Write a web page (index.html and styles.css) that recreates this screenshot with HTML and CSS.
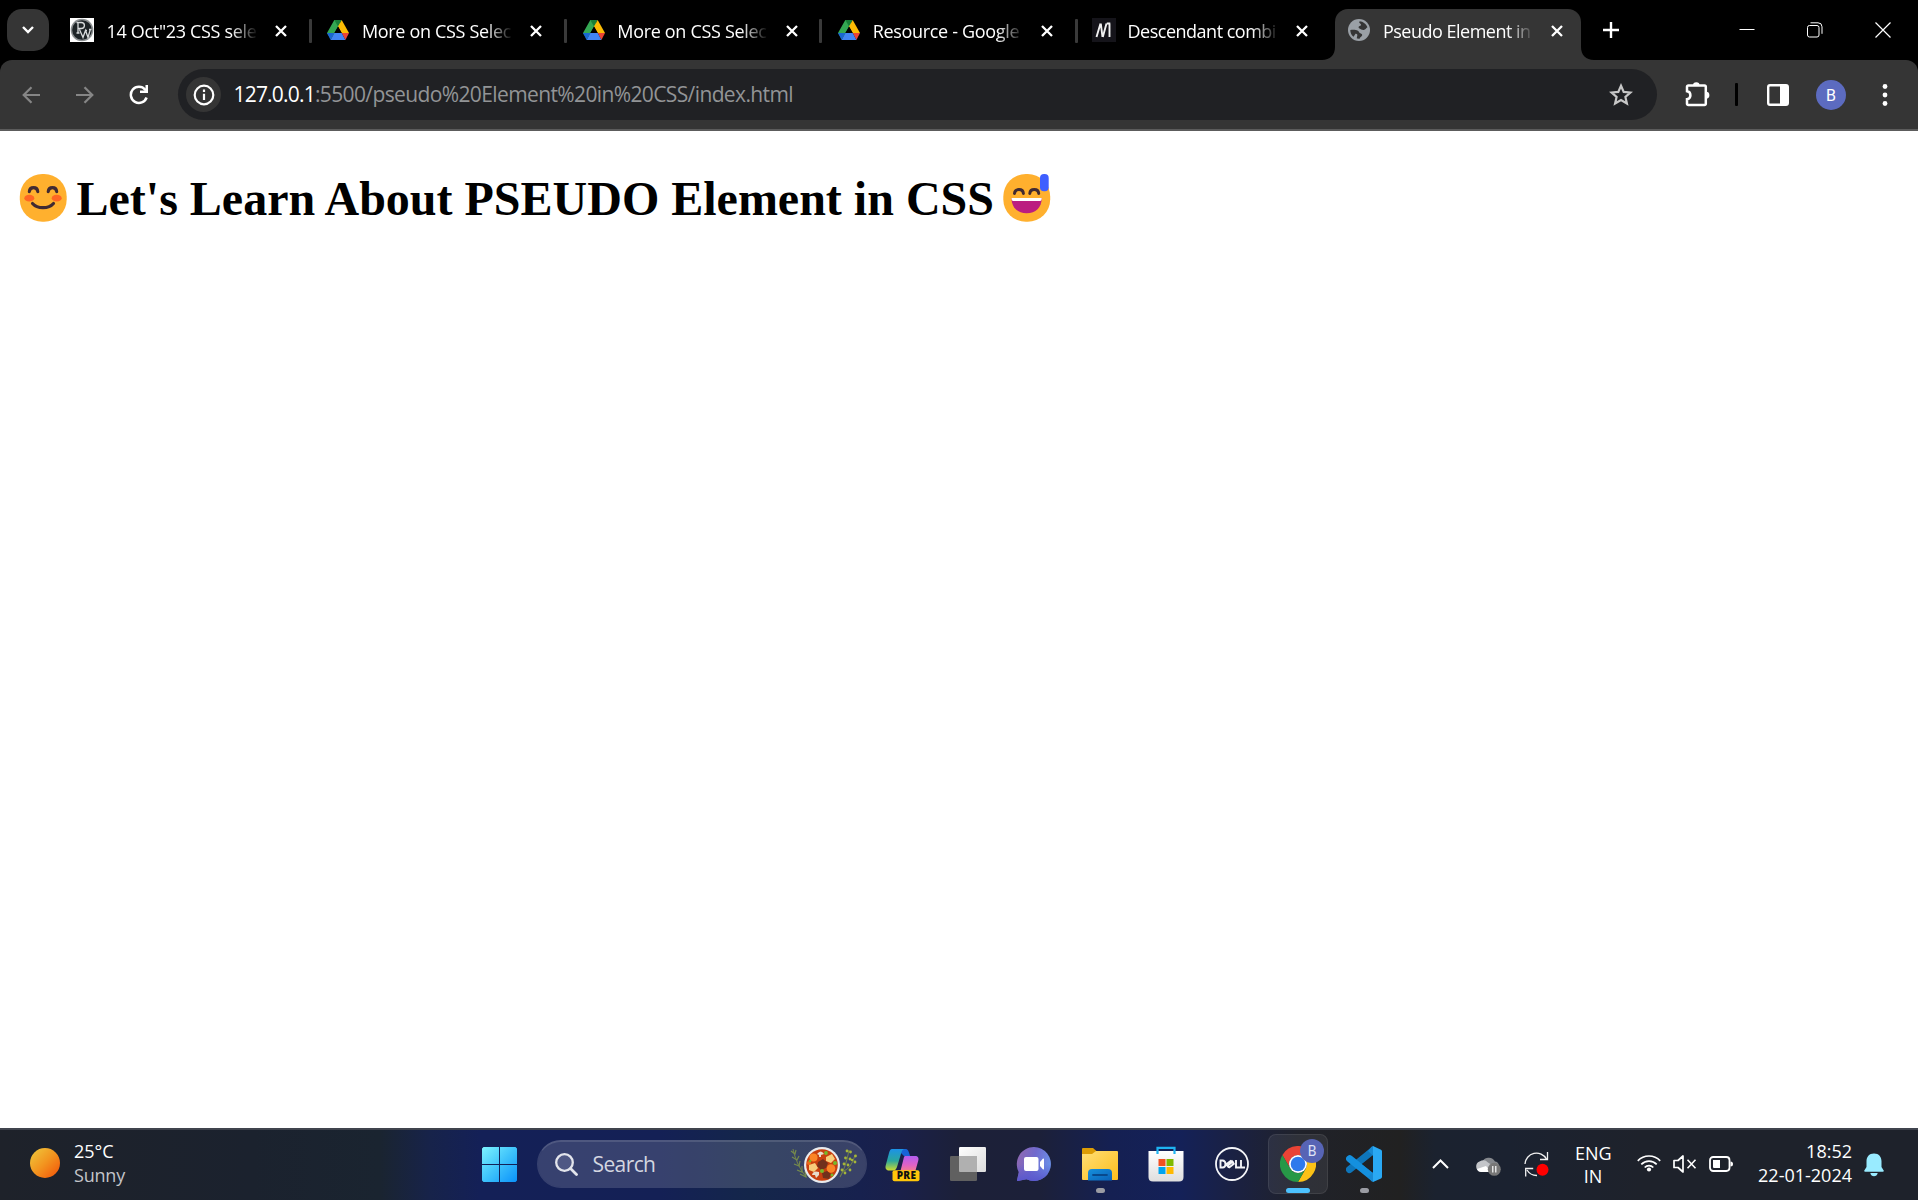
FILE: index.html
```html
<!DOCTYPE html>
<html lang="en">
<head>
<meta charset="utf-8">
<title>Pseudo Element in CSS</title>
<link rel="stylesheet" href="styles.css">
</head>
<body>
<svg class="defs" width="0" height="0" aria-hidden="true">
  <symbol id="drive" viewBox="0 0 22 20">
    <path fill="#34a853" d="M7.3 0h3.7l3.8 6.6-3.6.1L4 19.2 0 13z"/>
    <path fill="#188038" d="M7.3 0h7.4L11 6.6z"/>
    <path fill="#fbbc04" d="M14.7 0 22 13h-7.3L11 6.6z"/>
    <path fill="#ea4335" d="M22 13l-3.6 7-3.7-7z"/>
    <path fill="#4285f4" d="M7.3 13h7.4l3.7 7H3.6z"/>
    <path fill="#1967d2" d="M0 13h7.3L3.6 20z"/>
    <path fill="#000" d="M11 6.6l3.7 6.4H7.3z"/>
  </symbol>
  <symbol id="close" viewBox="0 0 12 12"><path d="M1 1l10 10M11 1L1 11" stroke="#fff" stroke-width="2.3" fill="none"/></symbol>
</svg>

<header class="tabstrip">
  <button class="tab-search"><svg width="12" height="8" viewBox="0 0 12 8"><path d="M1 1l5 5 5-5" fill="none" stroke="#fff" stroke-width="2.4"/></svg></button>
  <nav class="tabs">
    <div class="tab">
      <svg class="favicon" viewBox="0 0 24 24"><path fill="#fff" d="M0 0h24v24H0z"/><circle cx="12" cy="12" r="11.3" fill="#8b8f91"/><circle cx="12" cy="12" r="9.8" fill="#1e2427"/><path d="M8 15V4.500h3.200c4.300 0 4.300 6 0 6H8M6.500 4.500H8M6.500 15h3M9.500 11.500l3.500 8 2.500-7 2.500 7 2.300-8M15 12.500h2M19 11.500h2.500" fill="none" stroke="#d9dcdd" stroke-width="1.3"/></svg>
      <span class="title">14 Oct"23 CSS sele</span>
      <svg class="close"><use href="#close"/></svg>
    </div>
    <div class="tab">
      <svg class="favicon drive"><use href="#drive"/></svg>
      <span class="title">More on CSS Selec</span>
      <svg class="close"><use href="#close"/></svg>
    </div>
    <div class="tab">
      <svg class="favicon drive"><use href="#drive"/></svg>
      <span class="title">More on CSS Selec</span>
      <svg class="close"><use href="#close"/></svg>
    </div>
    <div class="tab">
      <svg class="favicon drive"><use href="#drive"/></svg>
      <span class="title">Resource - Google</span>
      <svg class="close"><use href="#close"/></svg>
    </div>
    <div class="tab last">
      <svg class="favicon" viewBox="0 0 24 24"><path fill="#15141a" d="M0 0h24v24H0z"/><path d="M4.500 19L8.500 5.500M8.800 5.500L10.500 19M10.800 19L14.500 5.500M17.500 5.500v13.500M14.800 5.500h3.500" fill="none" stroke="#f2f2f2" stroke-width="1.900"/></svg>
      <span class="title tight">Descendant combi</span>
      <svg class="close"><use href="#close"/></svg>
    </div>
    <div class="tab active">
      <svg class="favicon" viewBox="0 0 24 24"><circle cx="12" cy="12" r="11" fill="#9aa0a6"/><path fill="#353535" d="M12.600 3.200c3.600.3 6.700 2.700 7.800 6-1.400 1-2 2.500-3.600 2.700-1.900.2-3-.8-4.300-1.400-1.100-.5-1.200-1.600-.4-2.200.9-.7 2-.7 1.900-1.900-.1-1-1.600-1.100-1.800-2zM3.300 12c2.500-.5 5.400-.5 7.600.8 1.100.7 1 2 2.400 2.500 1.300.5 2.200 1 1.800 2.200-.5 1.300-2 1.400-2.500 3.200C7.500 21 3.300 17 3.300 12z"/><path fill="#9aa0a6" d="M8.500 15.800c1.500-.3 2 .7 1.800 1.800l-.8 3.800-3.500-2z"/></svg>
      <span class="title tight">Pseudo Element in</span>
      <svg class="close"><use href="#close"/></svg>
      <svg class="flare left" viewBox="0 0 13 13"><path d="M13 0v13H0C8 13 13 8 13 0z" fill="#353535"/></svg>
      <svg class="flare right" viewBox="0 0 13 13"><path d="M0 0v13h13C5 13 0 8 0 0z" fill="#353535"/></svg>
    </div>
  </nav>
  <svg class="new-tab" width="16" height="16" viewBox="0 0 16 16"><path d="M8 0v16M0 8h16" stroke="#fff" stroke-width="2.400"/></svg>
  <div class="window-controls">
    <svg width="16" height="16" viewBox="0 0 16 16"><path d="M.5 7.500h15" stroke="#fff" stroke-width="1"/></svg>
    <svg width="16" height="16" viewBox="0 0 16 16"><rect x=".5" y="3.500" width="11.500" height="11.500" rx="2" fill="none" stroke="#fff"/><path d="M3.500.8h7.500a4 4 0 0 1 4 4v7" fill="none" stroke="#fff"/></svg>
    <svg width="16" height="16" viewBox="0 0 16 16"><path d="M.5.5l15 15M15.500.5l-15 15" stroke="#fff" stroke-width="1.200"/></svg>
  </div>
</header>

<div class="toolbar-wrap">
<div class="toolbar">
  <svg class="back" width="18" height="18" viewBox="0 0 18 18"><path d="M18 9H2M9.500 1.200L1.700 9l7.800 7.800" fill="none" stroke="#868686" stroke-width="2.200"/></svg>
  <svg class="forward" width="18" height="18" viewBox="0 0 18 18"><path d="M0 9h16M8.500 1.200L16.300 9l-7.800 7.800" fill="none" stroke="#868686" stroke-width="2.200"/></svg>
  <svg class="reload" width="20" height="20" viewBox="0 0 20 20"><path d="M17.600 12.500A8.100 8.100 0 1 1 16.200 4.600L17 5.500" fill="none" stroke="#fff" stroke-width="2.500"/><path d="M19 0v8h-8V5.500h5.500V0z" fill="#fff"/></svg>
  <div class="omnibox">
    <span class="site-info"><svg width="22" height="22" viewBox="0 0 22 22"><circle cx="11" cy="11" r="9.300" fill="none" stroke="#fff" stroke-width="2.200"/><path d="M11 9.800v6.200M11 5.600v2.300" stroke="#fff" stroke-width="2.200"/></svg></span>
    <span class="url"><b>127.0.0.1</b><span>:5500/pseudo%20Element%20in%20CSS/index.html</span></span>
    <svg class="star" width="24" height="24" viewBox="0 0 24 24"><path d="M12 2.800l2.700 6.100 6.700.6-5 4.400 1.500 6.600-5.900-3.500-5.900 3.500 1.500-6.600-5-4.400 6.700-.6z" fill="none" stroke="#c7c7c7" stroke-width="2.200"/></svg>
  </div>
  <svg class="extensions" width="26" height="26" viewBox="0 0 26 26"><path d="M3.300 4.400h16.200a1.300 1.300 0 0 1 1.300 1.300v17a1.300 1.300 0 0 1-1.300 1.300H3.300A1.300 1.300 0 0 1 2 22.700v-4.500c2.200-.3 3.400-1.900 3.400-4s-1.200-3.700-3.400-4V5.700a1.300 1.300 0 0 1 1.300-1.300z" fill="none" stroke="#fff" stroke-width="2.500"/><path d="M8 4.500a3.300 3.300 0 0 1 6.600 0zM21 10.800a3.300 3.300 0 0 1 0 6.800z" fill="#fff"/></svg>
  <i class="divider"></i>
  <svg class="side-panel" width="22" height="22" viewBox="0 0 22 22"><rect x="1.200" y="1.200" width="19.600" height="19.600" rx="1.800" fill="none" stroke="#fff" stroke-width="2.400"/><path d="M13 1h8v20h-8z" fill="#fff"/></svg>
  <span class="avatar">B</span>
  <svg class="menu" width="6" height="24" viewBox="0 0 6 24"><g fill="#fff"><circle cx="3" cy="3.500" r="2.400"/><circle cx="3" cy="12" r="2.400"/><circle cx="3" cy="20.500" r="2.400"/></g></svg>
</div>
</div>

<main class="page">
  <h1>
    <svg width="48" height="48" viewBox="0 0 48 48"><rect x=".8" y="0" width="46.900" height="47.800" rx="22.500" fill="#ffb02e"/><ellipse cx="10.300" cy="24.200" rx="5" ry="3.400" fill="#ff6723"/><ellipse cx="37.700" cy="24.200" rx="5" ry="3.400" fill="#ff6723"/><path d="M10.300 17.600c.5-5.300 8-5.300 8.500 0M29.200 17.600c.5-5.300 8-5.300 8.500 0M13.500 29.400c4.800 5.600 16.200 5.600 21 0" fill="none" stroke="#402a32" stroke-width="3.100" stroke-linecap="round"/></svg>
    <span>Let's Learn About PSEUDO Element in CSS</span>
    <svg width="48" height="48" viewBox="0 0 48 48"><rect x=".3" y="0" width="46.900" height="47.800" rx="22.500" fill="#ffb02e"/><path d="M11.500 19.500c.4-5.200 8.500-5.200 8.900 0M26.800 19.500c.4-5.200 8.500-5.200 8.900 0" fill="none" stroke="#402a32" stroke-width="3" stroke-linecap="round"/><path d="M8.500 24h30.200c0 9.500-6 15.300-15.100 15.300S8.500 33.500 8.500 24z" fill="#bb1d80"/><path d="M8.500 24h30.200c0 1.900-.5 3-1.700 3H10.200c-1.200 0-1.700-1.100-1.700-3z" fill="#fff"/><rect x="37" y="0" width="8.700" height="17.300" rx="4" fill="#3f5fff"/></svg>
  </h1>
</main>

<footer class="taskbar">
  <div class="weather"><i class="sun"></i><p>25°C<br><span>Sunny</span></p></div>
  <svg class="start" width="35" height="35" viewBox="0 0 35 35">
    <defs><linearGradient id="win" gradientUnits="userSpaceOnUse" x1="0" y1="0" x2="35" y2="35"><stop offset="0" stop-color="#7df3ff"/><stop offset=".5" stop-color="#3fc3fb"/><stop offset="1" stop-color="#0a92fb"/></linearGradient></defs>
    <path fill="url(#win)" d="M1.500 0H17v17H0V1.500zM18 0h15.500L35 1.500V17H18zM0 18h17v17H1.500L0 33.500zM18 18h17v15.500L33.500 35H18z"/></svg>
  <div class="search">
    <svg width="23" height="23" viewBox="0 0 23 23"><circle cx="9.500" cy="9.500" r="8.300" fill="#8088ad55" stroke="#e3e5ec" stroke-width="2.300"/><path d="M15.500 15.500l6 6" stroke="#e3e5ec" stroke-width="2.800" stroke-linecap="round"/></svg>
    <span>Search</span>
    <svg class="bowl" width="68" height="38" viewBox="0 0 68 38">
      <path d="M3 3q3 15 13 28M50 31q6-10 9-27M52 26q10-4 13-17" fill="none" stroke="#71804b" stroke-width="1.100"/>
      <g stroke="#758b4d" stroke-width="1.200" fill="none"><path d="M1 5l4 3 1-4M2 11l5 3 2-4M4 18l5 2 1-5M7 24l5 2v-6M10 28l6 3-1-6"/></g>
      <g fill="#a5b638"><circle cx="57" cy="5" r="1.400"/><circle cx="60.500" cy="6" r="1.400"/><circle cx="55.500" cy="12" r="1.400"/><circle cx="60" cy="13" r="1.400"/><circle cx="54" cy="18" r="1.400"/><circle cx="58" cy="19" r="1.400"/><circle cx="65.500" cy="10" r="1.400"/><circle cx="62" cy="14" r="1.200"/><circle cx="65" cy="16" r="1.400"/><circle cx="60" cy="24" r="1.400"/><circle cx="52" cy="24" r="1.400"/><circle cx="55" cy="27" r="1.400"/></g>
      <circle cx="32" cy="19" r="18" fill="#e9ebee"/><circle cx="32" cy="19" r="15.800" fill="#c8400f"/>
      <circle cx="23.500" cy="11.500" r="4" fill="#fb8526"/><circle cx="41" cy="22.500" r="4.300" fill="#fb8526"/><circle cx="19" cy="17" r="2" fill="#ee6c17"/>
      <path d="M36 11l6-3 3 5-4 4-5-2zM19 19l6-2 3 5-4 4-5-2z" fill="#f8cd7b"/>
      <path d="M28 16l5-3 5 4-2 5-5 2-4-4zM32 27l5-2 4 3-2 5-6-1z" fill="#71301c"/>
      <path d="M27 8q4-5 7 0l-3 1v2h-2V9zM22 29q1-5 7-3v3l-3 3-1-3z" fill="#e8dccb"/>
      <g fill="#75b82a"><circle cx="36" cy="7" r="1.900"/><circle cx="45" cy="17" r="2"/><circle cx="32" cy="25" r="2"/><circle cx="20" cy="15" r="1.300"/><circle cx="42" cy="29" r="1.500"/></g>
    </svg>
  </div>
  <div class="apps">
    <div class="app"><svg width="36" height="36" viewBox="0 0 36 36">
      <defs><linearGradient id="cpa" x1="0" y1="0" x2="0" y2="1"><stop offset="0" stop-color="#1c92e8"/><stop offset=".55" stop-color="#2ba79d"/><stop offset="1" stop-color="#cddb2e"/></linearGradient><linearGradient id="cpb" x1="0" y1="0" x2="0" y2="1"><stop offset="0" stop-color="#b25df0"/><stop offset=".5" stop-color="#e062c6"/><stop offset="1" stop-color="#ff8a70"/></linearGradient></defs>
      <path fill="#1763d8" d="M10 3h11c3 0 3.500 2 4.300 4.500l.8 2.500H20l-3-3z"/>
      <path fill="url(#cpa)" d="M8 3h13c-2 0-3 1.500-3.600 3.500L13 21c-.8 2.500-2 3.500-4 3.500H5c-3 0-4-2.500-3.300-5L5 7c.8-2.800 1.500-4 3-4z"/>
      <path fill="url(#cpb)" d="M21 10h10c3 0 4 2 3.300 4.500L30.500 28H13c2 0 3-1.500 3.600-3.500L19.500 13c.4-1.600.7-3 1.500-3z"/>
      <rect x="8.500" y="24.300" width="27" height="11" rx="2" fill="#ffc60a"/></svg><span class="pre">PRE</span></div>
    <div class="app"><svg width="36" height="36" viewBox="0 0 36 36"><defs><linearGradient id="tv" x1="0" y1="0" x2="1" y2="1"><stop offset="0" stop-color="#fff"/><stop offset="1" stop-color="#dcdcdc"/></linearGradient></defs><rect x="9" y="1" width="27" height="25" rx="1.200" fill="url(#tv)"/><rect x="0" y="10" width="27" height="25" rx="1.200" fill="#606060"/><path d="M9 10h18v16H10q-1 0-1-1z" fill="#b0b0b0"/></svg></div>
    <div class="app"><svg width="36" height="36" viewBox="0 0 36 36"><defs><linearGradient id="ch" x1="0" y1=".2" x2="1" y2=".5"><stop offset="0" stop-color="#9068b0"/><stop offset=".5" stop-color="#7069cd"/><stop offset="1" stop-color="#6b91e8"/></linearGradient><linearGradient id="ch2" x1="0" y1="0" x2="0" y2="1"><stop offset=".5" stop-color="#5957cd" stop-opacity="0"/><stop offset="1" stop-color="#5957cd"/></linearGradient></defs><path d="M18 1a17 17 0 1 1-7.500 32.300L1.500 35q-.7-.2-.4-1l1.700-8A17 17 0 0 1 18 1z" fill="url(#ch)"/><path d="M18 1a17 17 0 1 1-7.500 32.300L1.500 35q-.7-.2-.4-1l1.700-8A17 17 0 0 1 18 1z" fill="url(#ch2)"/><rect x="8" y="11" width="14.500" height="14" rx="2" fill="#fff"/><path d="M24 16l2.800-3.200q1.200-.8 1.200.5v9.400q0 1.300-1.200.5L24 20z" fill="#fff"/></svg></div>
    <div class="app"><svg width="36" height="36" viewBox="0 0 36 36"><defs><linearGradient id="fo" x1="0" y1="0" x2="1" y2="1"><stop offset="0" stop-color="#ffdf75"/><stop offset="1" stop-color="#fcbd1c"/></linearGradient><linearGradient id="fb" x1="0" y1="0" x2="1" y2="1"><stop offset="0" stop-color="#1690dc"/><stop offset="1" stop-color="#0a62b8"/></linearGradient></defs><path d="M0 3q0-1 1-1h10l4 3.500L11 9H0z" fill="#dc9c04"/><path d="M0 8h10l4-3h21q1 0 1 1v27q0 1-1 1H1q-1 0-1-1z" fill="url(#fo)"/><path d="M6 34.500V27q0-4 4-4h16q4 0 4 4v7.500z" fill="url(#fb)"/><path d="M11 29h14" stroke="#08498c" stroke-width="1.800" stroke-linecap="round"/></svg><i class="mark"></i></div>
    <div class="app"><svg width="36" height="36" viewBox="0 0 36 36"><defs><linearGradient id="st" x1="0" y1="0" x2="0" y2="1"><stop offset="0" stop-color="#fff"/><stop offset="1" stop-color="#dedede"/></linearGradient></defs><path d="M.5 5h35v26q0 4.500-4.500 4.500H5Q.5 35.500.5 31z" fill="url(#st)"/><path d="M9.500 8V1.900h17V8" fill="none" stroke="#1eb3f1" stroke-width="2.200"/><path fill="#f25022" d="M10.500 13h7v7h-7z"/><path fill="#7fba00" d="M18.500 13h7v7h-7z"/><path fill="#00a4ef" d="M10.500 21h7v7h-7z"/><path fill="#ffb900" d="M18.500 21h7v7h-7z"/></svg></div>
    <div class="app"><svg width="36" height="36" viewBox="0 0 36 36"><circle cx="18" cy="18" r="16" fill="none" stroke="#f4f5f8" stroke-width="1.800"/><path d="M6.500 14.500v7h2c4 0 4-7 0-7zM12.300 18.300l5-3.900M13.300 20l5-3.900M14.800 21.800l5.700-4.500M12.300 18.300l2.700 3.400M17.300 14.400l2.300 2.500M22 14v7.500h4M27 14v7.500h4" fill="none" stroke="#f4f5f8" stroke-width="1.900"/></svg></div>
    <div class="app open"><svg width="36" height="36" viewBox="0 0 36 36"><path fill="#ea4335" d="M2.400 9A18 18 0 0 1 33.600 9H18a9 9 0 0 0-7.800 4.500z"/><path fill="#ea4335" d="M2.400 9l7.800 13.500A9 9 0 0 1 18 9z"/><path fill="#fbc116" d="M33.600 9A18 18 0 0 1 18 36l7.800-13.500A9 9 0 0 0 18 9z"/><path fill="#279847" d="M2.400 9A18 18 0 0 0 18 36l7.800-13.500a9 9 0 0 1-15.600 0z"/><circle cx="18" cy="18" r="9" fill="#fff"/><circle cx="18" cy="18" r="7.300" fill="#2e79ec"/></svg><span class="profile">B</span><i class="mark wide"></i></div>
    <div class="app"><svg width="36" height="36" viewBox="0 0 36 36"><path d="M3.500 23.500L27 4.500" stroke="#0e76bb" stroke-width="7" stroke-linecap="round"/><path d="M3.700 12.700L27 31.500" stroke="#1490df" stroke-width="7.200" stroke-linecap="round"/><path d="M27 0l8 3.700q1 .5 1 1.600v25.500q0 1.100-1 1.600L27 36z" fill="#2aa9f4"/><path d="M27 9.700v16.600L16.300 18z" fill="#202124"/><path d="M27 0v9.700l-5-4.800L25.500.8zM27 36v-9.700l-5 4.800 3.500 4.100z" fill="#1789d3"/></svg><i class="mark"></i></div>
  </div>
  <div class="tray">
    <svg class="more" width="17" height="10" viewBox="0 0 17 10"><path d="M1 9l7.500-7.500L16 9" fill="none" stroke="#fff" stroke-width="2"/></svg>
    <svg class="cloud" width="25" height="20" viewBox="0 0 25 20"><path d="M6 7a7 7 0 0 1 13-1.500q3 0 4 4L12 14z" fill="#85888d"/><path d="M4 15.500a5.300 5.300 0 0 1-.5-10q5-3 8.500 1L19 11l-5 5z" fill="#c3c5c9"/><path d="M1 13l9-3 5 6H5q-3 0-4-3z" fill="#fff"/><circle cx="18.300" cy="13.300" r="6.500" fill="#777"/><path d="M16.800 10v6.500M19.800 10v6.500" stroke="#fff" stroke-width="1.200"/></svg>
    <svg class="sync" width="26" height="26" viewBox="0 0 26 26"><path d="M1 13A11.500 11.500 0 0 1 22.500 8M23.500 1v7.500H16M13 24.500A11.500 11.500 0 0 1 3 19M1.700 25.500V17.500h7.500" fill="none" stroke="#f2f2f2" stroke-width="1.300"/><circle cx="18.500" cy="18.800" r="6" fill="#f00"/></svg>
    <p class="lang">ENG<br>IN</p>
    <svg class="wifi" width="24" height="18" viewBox="0 0 24 18"><path d="M.8 6.800a15.500 15.500 0 0 1 22.400 0M4.300 10.300a10.700 10.700 0 0 1 15.400 0M7.700 13.500a6 6 0 0 1 8.600 0" fill="none" stroke="#fff" stroke-width="1.700"/><circle cx="12" cy="15.500" r="2.100" fill="#fff"/></svg>
    <svg class="sound" width="24" height="18" viewBox="0 0 24 18"><path d="M1 5.500h4L10 1v16l-5-4.500H1z" fill="none" stroke="#fff" stroke-width="1.700" stroke-linejoin="round"/><path d="M14.500 4.800l8 8.400M22.500 4.800l-8 8.400" stroke="#fff" stroke-width="1.600"/></svg>
    <svg class="battery" width="24" height="16" viewBox="0 0 24 16"><rect x="1" y="1" width="19.500" height="14" rx="3.200" fill="none" stroke="#fff" stroke-width="1.800"/><path d="M21.500 5.500q2.500 0 2.500 2.500t-2.500 2.500zM4 4h7v8H5q-1 0-1-1z" fill="#fff"/></svg>
    <p class="clock">18:52<br>22-01-2024</p>
    <svg class="bell" width="20" height="24" viewBox="0 0 20 24"><path d="M10 .5c5 0 7.500 3.500 7.500 7.800V14l2.200 3.500q.5 1.300-1 1.300H1.300q-1.500 0-1-1.300L2.500 14V8.300C2.500 4 5 .5 10 .5zM6.300 20h7.400q-.8 3.200-3.700 3.200T6.300 20z" fill="#99ebff"/></svg>
  </div>
</footer>
</body>
</html>
```
FILE: styles.css
```css
* { box-sizing: border-box; }
html, body { height: 100%; }
body {
  margin: 0;
  display: flex;
  flex-direction: column;
  overflow: hidden;
  background: #fff;
  font-family: "Open Sans", "Noto Sans", sans-serif;
  font-size: 18px;
  color: #fff;
}
svg { display: block; flex: none; }
p { margin: 0; }
.defs { position: absolute; }

/* Tab strip */
.tabstrip { display: flex; height: 60px; flex: none; background: #000; padding-left: 7px; }
.tab-search {
  width: 42px; height: 42px; margin-top: 9px; padding: 0;
  display: grid; place-items: center;
  border: 0; border-radius: 15px; background: #353535;
}
.tabs { display: flex; margin-left: 9px; }
.tab { position: relative; display: flex; align-items: center; width: 255.4px; padding-left: 12px; }
.tab:not(.last):not(.active)::after {
  content: ""; width: 3px; height: 24px; margin: 2px 0 0 21.500px;
  border-radius: 1px; background: #3a3a3a;
}
.favicon { width: 24px; height: 24px; }
.favicon.drive { width: 22px; height: 20px; margin: 0 0 0 2px; }
.title {
  width: 149.500px; height: 28px; line-height: 28px; margin: 2.500px 0 0 12.500px;
  white-space: nowrap; letter-spacing: -.32px;
  -webkit-mask-image: linear-gradient(90deg, #000 124px, transparent 151px);
  mask-image: linear-gradient(90deg, #000 124px, transparent 151px);
}
.title.tight { margin-left: 12px; letter-spacing: -.5px; }
.close { width: 12px; height: 12px; margin: 1px 0 0 19px; }
.tab.active { width: 246px; height: 51px; margin-top: 9px; padding-bottom: 9px; background: #353535; border-radius: 13px 13px 0 0; }
.flare { position: absolute; bottom: 0; width: 13px; height: 13px; }
.flare.left { left: -13px; }
.flare.right { right: -13px; }
.new-tab { margin: 22px 0 0 22px; }
.window-controls { display: flex; gap: 52px; margin: 22px 27px 0 auto; }

/* Toolbar */
.toolbar-wrap { flex: none; background: #000; }
.toolbar {
  display: flex; align-items: center; height: 71px; padding-left: 22px;
  background: #353535; border-bottom: 2px solid #5c5c5c; border-radius: 12px 12px 0 0;
}
.forward { margin-left: 36px; }
.reload { margin-left: 35px; }
.omnibox {
  display: flex; align-items: center; width: 1479px; height: 51px; margin-left: 29px;
  padding: 0 24px 0 8px; border-radius: 26px; background: #202124;
}
.site-info { display: grid; place-items: center; width: 35px; height: 35px; border-radius: 50%; background: #353535; }
.url { margin: -2px auto 0 12.500px; font-size: 21px; color: #929496; letter-spacing: -.62px; }
.url b { font-weight: 400; color: #fff; letter-spacing: -.8px; }
.extensions { margin: -2px 0 0 28px; }
.divider { width: 3px; height: 23px; margin-left: 24px; border-radius: 1px; background: #000; }
.side-panel { margin-left: 29px; }
.avatar {
  width: 30px; height: 30px; margin-left: 27px; border-radius: 50%; background: #5c6bc0;
  font: 16px/31px Roboto, sans-serif; text-align: center;
}
.menu { margin-left: 36px; }

/* Page */
.page { flex: 1; padding: 43px 0 0 18.500px; color: #000; }
h1 {
  display: flex; margin: 0; white-space: nowrap;
  font: bold 48px/48px "Liberation Serif", "Times New Roman", serif;
}
h1 span { margin: 1px 9px 0 10px; }

/* Taskbar */
.taskbar {
  display: flex; align-items: center; flex: none; height: 72px; padding-left: 30px;
  border-top: 2px solid #40444e;
  background: linear-gradient(90deg, #1e222a 0, #1b222e 250px, #1a2430 380px, #17234a 430px, #142057 480px, #142055 660px, #14264a 750px, #17214e 860px, #1a204a 900px, #1c2038 960px, #1c2039 1040px, #152052 1110px, #142158 1180px, #1b2140 1240px, #20222a 1300px, #212121 1400px, #1b222f 1435px, #1b2230 1510px, #1e222b 1640px);
  line-height: 24px;
}
.weather { display: flex; align-items: center; width: 452px; }
.sun { width: 30px; height: 30px; margin-top: -4px; border-radius: 50%; background: linear-gradient(135deg, #f0be36 12%, #f2941f 50%, #f2600d 88%); }
.weather p { margin: -4px 0 0 14px; }
.weather span { color: #c3c5c9; letter-spacing: -.2px; }
.start { margin-top: -1px; }
.search {
  display: flex; align-items: center; width: 330px; height: 48px; margin: -2px 0 0 20px; padding: 0 8px 0 17px;
  border: 1px solid #ffffff26; border-top: 2px solid #ffffff40; border-radius: 24px; background: #ffffff26;
  background-clip: padding-box;
}
.search span { margin: -1px 0 0 14.500px; font-size: 21px; letter-spacing: -.6px; color: #d3d6e0; }
.bowl { margin-left: auto; }
.apps { display: flex; margin: -2px 0 0 2px; }
.app { position: relative; display: grid; place-items: center; width: 66px; height: 60px; }
.app svg { margin-top: -1px; }
.app.open::before {
  content: ""; position: absolute; inset: 0 3px; border-radius: 8px;
  background: #ffffff12; border: 1px solid #ffffff14;
}
.app.open svg { position: relative; }
.pre {
  position: absolute; left: 24px; top: 36px; width: 27px; text-align: center; color: #111;
  font-size: 10px; line-height: 11px; font-weight: 800; letter-spacing: .3px;
}
.profile {
  position: absolute; left: 35px; top: 5px; width: 24px; height: 24px; border-radius: 50%;
  background: #5764b5; color: #dfe2f5; font: 14px/24px Roboto, sans-serif; text-align: center;
}
.mark { position: absolute; left: 29px; bottom: 1px; width: 9px; height: 5px; border-radius: 3px; background: #9b9ca3; }
.mark.wide { left: 21px; width: 24px; background: #4cc2ff; }

.tray { display: flex; align-items: center; margin-left: 35px; }
.more { margin-top: -2px; }
.cloud { margin-left: 26.500px; margin-top: 2px; }
.sync { margin-left: 23px; margin-top: -2px; }
.lang { width: 36px; margin-left: 25.500px; text-align: center; line-height: 23px; }
.wifi { margin: -4px 0 0 26px; }
.sound { margin: -2px 0 0 12px; }
.battery { margin: -2px 0 0 12px; }
.clock { width: 96px; margin: -4px 0 0 23px; text-align: right; white-space: nowrap; }
.bell { margin-left: 12px; }
```
